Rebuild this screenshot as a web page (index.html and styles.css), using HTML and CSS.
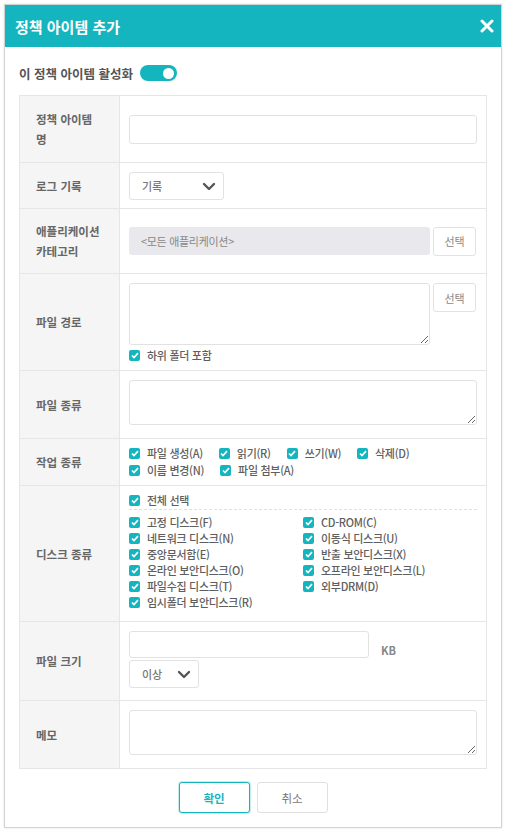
FILE: index.html
```html
<!DOCTYPE html>
<html lang="ko">
<head>
    <meta charset="UTF-8">
    <meta name="viewport" content="width=device-width, initial-scale=1.0">
    <title>정책 아이템 추가</title>
    <link rel="stylesheet" href="styles.css">
</head>
<body>
    <div class="dialog">
        <div class="dialog-header">
            <h1>정책 아이템 추가</h1>
            <button class="close-btn" aria-label="닫기">
                <svg width="14" height="14" viewBox="0 0 14 14"><path d="M2 2L12 12M12 2L2 12" stroke="#fff" stroke-width="3" stroke-linecap="round"/></svg>
            </button>
        </div>

        <div class="dialog-body">
            <div class="enable-row">
                <span>이 정책 아이템 활성화</span>
                <span class="toggle"><span class="knob"></span></span>
            </div>

            <div class="form-table">
                <div class="form-row">
                    <div class="form-label label-tall">정책 아이템<br>명</div>
                    <div class="form-value">
                        <input class="text-input" type="text">
                    </div>
                </div>

                <div class="form-row">
                    <div class="form-label">로그 기록</div>
                    <div class="form-value value-tight">
                        <div class="select">
                            <span>기록</span>
                            <svg width="14" height="9" viewBox="0 0 14 9"><path d="M2 2L7 7L12 2" fill="none" stroke="#555" stroke-width="2.4" stroke-linecap="round" stroke-linejoin="round"/></svg>
                        </div>
                    </div>
                </div>

                <div class="form-row">
                    <div class="form-label">애플리케이션<br>카테고리</div>
                    <div class="form-value">
                        <div class="with-btn">
                            <div class="readonly-box">&lt;모든 애플리케이션&gt;</div>
                            <button class="small-btn">선택</button>
                        </div>
                    </div>
                </div>

                <div class="form-row">
                    <div class="form-label">파일 경로</div>
                    <div class="form-value">
                        <div class="with-btn">
                            <textarea class="path-area"></textarea>
                            <button class="small-btn">선택</button>
                        </div>
                        <label class="chk sub-folder"><span class="box"><svg width="8" height="7" viewBox="0 0 8 7"><path d="M1 3.5L3 5.5L7 1.2" fill="none" stroke="#fff" stroke-width="1.7"/></svg></span>하위 폴더 포함</label>
                    </div>
                </div>

                <div class="form-row">
                    <div class="form-label">파일 종류</div>
                    <div class="form-value">
                        <textarea class="area"></textarea>
                    </div>
                </div>

                <div class="form-row">
                    <div class="form-label">작업 종류</div>
                    <div class="form-value check-cell">
                        <div class="check-flow" id="job-types"></div>
                    </div>
                </div>

                <div class="form-row">
                    <div class="form-label">디스크 종류</div>
                    <div class="form-value check-cell">
                        <div class="all-row" id="disk-all"></div>
                        <div class="check-grid" id="disk-types"></div>
                    </div>
                </div>

                <div class="form-row">
                    <div class="form-label">파일 크기</div>
                    <div class="form-value">
                        <div class="size-line">
                            <input class="text-input size-input" type="text">
                            <span class="unit">KB</span>
                        </div>
                        <div class="select select-sm">
                            <span>이상</span>
                            <svg width="14" height="9" viewBox="0 0 14 9"><path d="M2 2L7 7L12 2" fill="none" stroke="#555" stroke-width="2.4" stroke-linecap="round" stroke-linejoin="round"/></svg>
                        </div>
                    </div>
                </div>

                <div class="form-row">
                    <div class="form-label">메모</div>
                    <div class="form-value">
                        <textarea class="area"></textarea>
                    </div>
                </div>
            </div>

            <div class="actions">
                <button class="btn btn-primary">확인</button>
                <button class="btn">취소</button>
            </div>
        </div>
    </div>

    <script>
        const jobTypes = ['파일 생성(A)', '읽기(R)', '쓰기(W)', '삭제(D)', '이름 변경(N)', '파일 첨부(A)'];
        const diskTypes = [
            '고정 디스크(F)', 'CD-ROM(C)',
            '네트워크 디스크(N)', '이동식 디스크(U)',
            '중앙문서함(E)', '반출 보안디스크(X)',
            '온라인 보안디스크(O)', '오프라인 보안디스크(L)',
            '파일수집 디스크(T)', '외부DRM(D)',
            '임시폴더 보안디스크(R)'
        ];

        function checkItem(text) {
            return `<label class="chk"><span class="box"><svg width="8" height="7" viewBox="0 0 8 7"><path d="M1 3.5L3 5.5L7 1.2" fill="none" stroke="#fff" stroke-width="1.7"/></svg></span>${text}</label>`;
        }

        document.getElementById('job-types').innerHTML = jobTypes.map(checkItem).join('');
        document.getElementById('disk-all').innerHTML = checkItem('전체 선택');
        document.getElementById('disk-types').innerHTML = diskTypes.map(checkItem).join('');
    </script>
</body>
</html>
```

FILE: styles.css
```css
body {
    margin: 0;
    padding: 4px;
    background-color: #fff;
    font-family: "Noto Sans CJK KR", "Noto Sans", sans-serif;
    color: #666;
}
.dialog {
    width: 498px;
    box-sizing: border-box;
    background-color: #fff;
    border: 1px solid #d3d3d3;
    box-shadow: 0 0 2px rgba(0,0,0,0.12);
}
.dialog-header {
    height: 42px;
    background-color: #14b5be;
    display: flex;
    align-items: center;
    justify-content: space-between;
    padding: 0 7px 0 10px;
}
.dialog-header h1 {
    margin: 0;
    font-size: 15px;
    font-weight: bold;
    color: #fff;
}
.close-btn {
    background: none;
    border: none;
    padding: 0;
    width: 14px;
    height: 14px;
    display: flex;
    cursor: pointer;
}
.dialog-body {
    padding: 18px 14px 14px;
}
.enable-row {
    display: flex;
    align-items: center;
    gap: 7px;
    height: 16px;
    margin-bottom: 14px;
    font-size: 12.5px;
    font-weight: bold;
    color: #555;
}
.toggle {
    width: 37px;
    height: 16px;
    box-sizing: border-box;
    border-radius: 8px;
    background-color: #14b5be;
    display: flex;
    align-items: center;
    justify-content: flex-end;
    padding-right: 3px;
}
.knob {
    width: 11px;
    height: 11px;
    border-radius: 50%;
    background-color: #fff;
}
.form-table {
    border: 1px solid #e6e6e6;
}
.form-row {
    display: grid;
    grid-template-columns: 100px 1fr;
    border-bottom: 1px solid #e6e6e6;
}
.form-row:last-child {
    border-bottom: none;
}
.form-label {
    background-color: #f5f5f5;
    border-right: 1px solid #e6e6e6;
    padding: 12px 16px;
    display: flex;
    align-items: center;
    font-size: 11.5px;
    font-weight: bold;
    line-height: 20px;
    color: #666;
}
.label-tall {
    padding-top: 13px;
    padding-bottom: 13px;
}
.form-value {
    padding: 9px;
    display: flex;
    flex-direction: column;
    justify-content: center;
    min-width: 0;
}
.value-tight {
    padding-bottom: 8px;
}
.text-input {
    width: 100%;
    height: 29px;
    box-sizing: border-box;
    border: 1px solid #e2e2e2;
    border-radius: 3px;
    margin: 0;
}
.select {
    width: 95px;
    height: 28px;
    box-sizing: border-box;
    border: 1px solid #e2e2e2;
    border-radius: 3px;
    display: flex;
    align-items: center;
    justify-content: space-between;
    padding: 0 7px 0 12px;
    font-size: 11px;
    font-weight: 500;
    color: #777;
}
.select-sm {
    width: 70px;
    margin-top: 2px;
    margin-bottom: 3px;
}
.with-btn {
    display: flex;
    align-items: flex-start;
    gap: 3px;
}
.readonly-box {
    flex: 1;
    height: 28px;
    border-radius: 3px;
    background-color: #e8e8ed;
    display: flex;
    align-items: center;
    padding-left: 12px;
    font-size: 11px;
    color: #888;
    letter-spacing: -0.3px;
}
.small-btn {
    width: 43px;
    height: 29px;
    margin-right: 1px;
    background-color: #fff;
    border: 1px solid #e2e2e2;
    border-radius: 3px;
    font-family: inherit;
    font-size: 11px;
    color: #888;
    padding: 0;
}
textarea {
    display: block;
    box-sizing: border-box;
    border: 1px solid #e2e2e2;
    border-radius: 3px;
    margin: 0;
    font-family: inherit;
}
.path-area {
    flex: 1;
    height: 62px;
}
.area {
    width: 100%;
    height: 45px;
    margin-bottom: 4px;
}
.sub-folder {
    margin-top: 2px;
    margin-bottom: -2px;
}
.check-cell {
    padding-top: 6px;
    padding-bottom: 7px;
}
.chk {
    display: inline-flex;
    align-items: center;
    gap: 7px;
    height: 16px;
    font-size: 11px;
    font-weight: 500;
    color: #5e5e5e;
    letter-spacing: -0.3px;
    white-space: nowrap;
}
.chk .box {
    width: 11px;
    height: 11px;
    border-radius: 2px;
    background-color: #14b5be;
    display: flex;
    align-items: center;
    justify-content: center;
    flex-shrink: 0;
}
.check-flow {
    display: flex;
    flex-wrap: wrap;
    column-gap: 16px;
    row-gap: 1px;
}
.all-row {
    display: flex;
    border-bottom: 1px dashed #e0e0e0;
    padding-bottom: 1px;
    margin-bottom: 4px;
}
.check-grid {
    display: grid;
    grid-template-columns: 1fr 1fr;
    margin-bottom: 4px;
}
.size-line {
    display: flex;
    align-items: center;
}
.size-input {
    width: 240px;
    height: 27px;
}
.unit {
    margin: 10px 0 0 12px;
    font-size: 11px;
    font-weight: bold;
    color: #888;
}
.actions {
    display: flex;
    justify-content: center;
    gap: 7px;
    margin-top: 13px;
}
.btn {
    width: 71px;
    height: 31px;
    background-color: #fff;
    border: 1px solid #e0e0e0;
    border-radius: 3px;
    font-family: inherit;
    font-size: 11.5px;
    color: #777;
    cursor: pointer;
}
.btn-primary {
    border-color: #14b5be;
    box-shadow: 0 0 0 1px rgba(20,181,190,0.25);
    color: #14b5be;
    font-weight: bold;
}
```
